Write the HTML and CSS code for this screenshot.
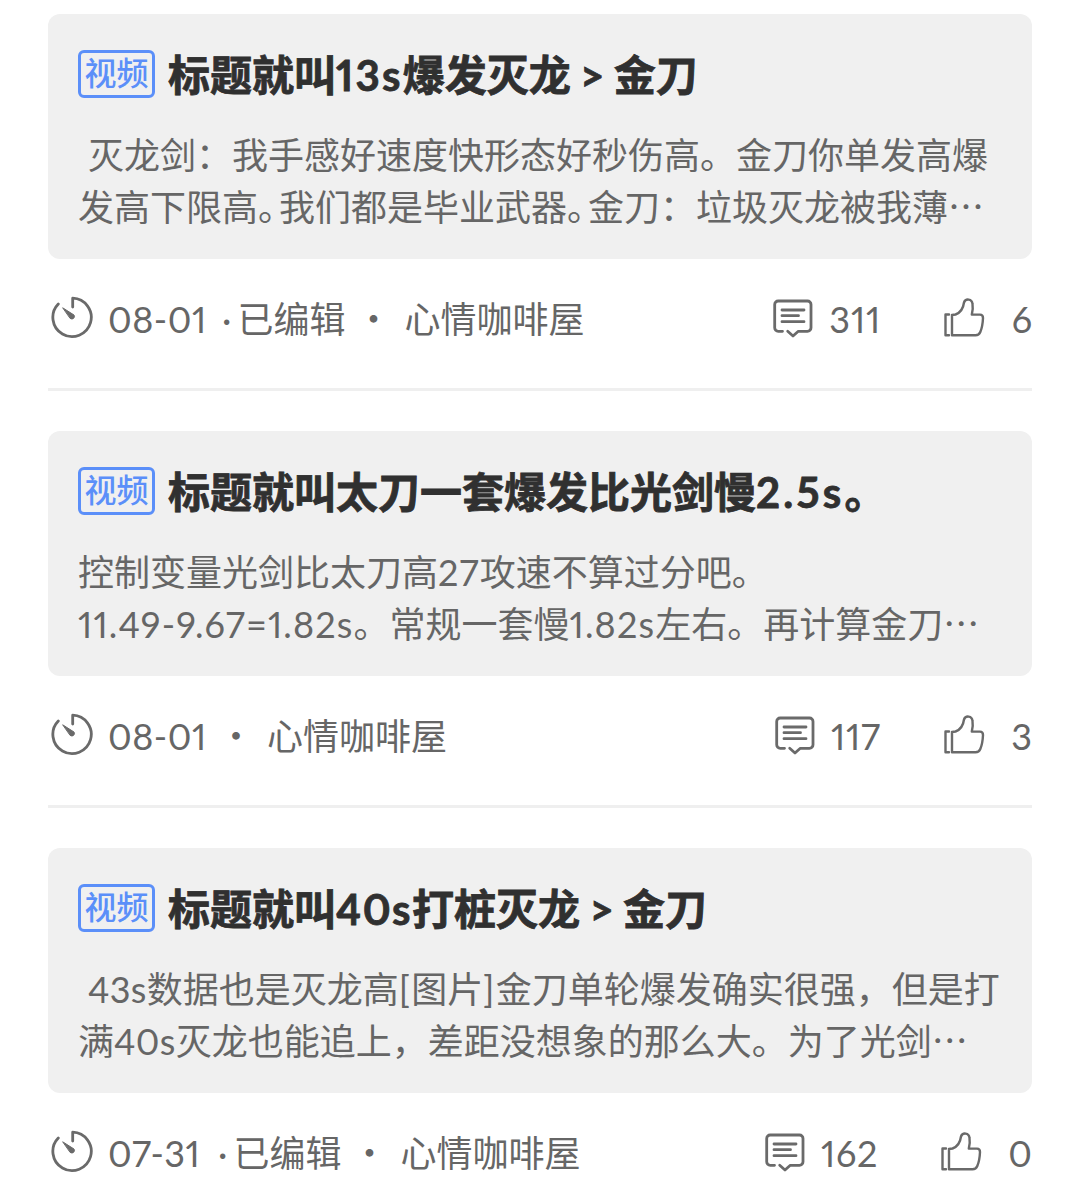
FILE: index.html
```html
<!DOCTYPE html>
<html lang="zh-CN">
<head>
<meta charset="UTF-8">
<meta name="viewport" content="width=device-width">
<title>心情咖啡屋</title>
<link rel="stylesheet" href="styles.css">
</head>
<body>

<!-- icons -->
<svg class="sprite" width="0" height="0">
	<symbol id="clock" viewBox="0 0 44 44">
		<path d="M8.300 9A19.200 19.200 0 1 0 22.700 3.200V12" />
		<path class="needle" d="M13 13l11 7a2.600 2.600 0 0 1-3.600 3.600z" />
	</symbol>
	<symbol id="comment" viewBox="0 0 44 44">
		<path d="M11.500 36.300H7.200a3.500 3.500 0 0 1-3.500-3.500V9.500A3.500 3.500 0 0 1 7.200 6H36.500A3.500 3.500 0 0 1 40 9.500V32.800a3.500 3.500 0 0 1-3.500 3.500H27.300L22 41l-5.300-4.700M11 15H33M11 20.700H27.500M11 26.700H33" />
	</symbol>
	<symbol id="like" viewBox="0 0 44 44">
		<path d="M7 19.500H3.500V40.300H7M10 20V40.300H33.500C36 40.300 37.500 39 38.300 37C40 33 40.800 28 41 23C41 20.500 40 19.600 38 19.600H29.800C30.800 15.500 31 12 30.500 9C30 3.500 23.500 3.200 22 7.500C21.300 13 19 17.500 13.500 19.500Z" />
	</symbol>
</svg>

<div class="feed">

	<!-- post -->
	<div class="post">
		<div class="card">
			<h2><span class="tag">视频</span><span class="title">标题就叫<span class="n13">13s</span>爆发灭龙<span class="gt">&gt;</span>金刀</span></h2>
			<p><span class="line lead">灭龙剑：我手感好速度快形态好秒伤高。金刀你单发高爆</span><span class="line">发高下限高<span class="stop">。</span>我们都是毕业武器<span class="stop">。</span>金刀：垃圾灭龙被我薄⋯</span></p>
		</div>
		<div class="meta">
			<svg class="icon clock"><use href="#clock" /></svg>
			<div class="info"><span class="date">08-01</span><span class="edited"><span class="mid">·</span>已编辑</span><span class="dot">・</span><span>心情咖啡屋</span></div>
			<svg class="icon"><use href="#comment" /></svg>
			<span class="num">311</span>
			<svg class="icon like"><use href="#like" /></svg>
			<span class="count">6</span>
		</div>
	</div>

	<!-- post -->
	<div class="post">
		<div class="card">
			<h2><span class="tag">视频</span><span class="title">标题就叫太刀一套爆发比光剑慢<span class="n25">2.5s</span>。</span></h2>
			<p><span class="line">控制变量光剑比太刀高<span class="calc">27</span>攻速不算过分吧。</span><span class="line"><span class="calc">11.49-9.67=1.82s</span>。常规一套慢<span class="calc">1.82s</span>左右。再计算金刀⋯</span></p>
		</div>
		<div class="meta">
			<svg class="icon clock"><use href="#clock" /></svg>
			<div class="info"><span class="date">08-01</span><span class="dot">・</span><span>心情咖啡屋</span></div>
			<svg class="icon"><use href="#comment" /></svg>
			<span class="num">117</span>
			<svg class="icon like"><use href="#like" /></svg>
			<span class="count">3</span>
		</div>
	</div>

	<!-- post -->
	<div class="post">
		<div class="card">
			<h2><span class="tag">视频</span><span class="title">标题就叫<span class="n40">40s</span>打桩灭龙<span class="gt">&gt;</span>金刀</span></h2>
			<p><span class="line lead"><span class="wide">43s</span>数据也是灭龙高<span class="bracket">[</span>图片<span class="bracket">]</span>金刀单轮爆发确实很强，但是打</span><span class="line">满<span class="wide">40s</span>灭龙也能追上，差距没想象的那么大。为了光剑⋯</span></p>
		</div>
		<div class="meta">
			<svg class="icon clock"><use href="#clock" /></svg>
			<div class="info"><span class="date short">07-31</span><span class="edited"><span class="mid">·</span>已编辑</span><span class="dot">・</span><span>心情咖啡屋</span></div>
			<svg class="icon"><use href="#comment" /></svg>
			<span class="num">162</span>
			<svg class="icon like"><use href="#like" /></svg>
			<span class="count">0</span>
		</div>
	</div>

</div>

</body>
</html>
```
FILE: styles.css
```css
* {
	margin: 0;
	padding: 0;
	box-sizing: border-box;
}

body {
	background: #fff;
	font-family: Lato, "Noto Sans CJK SC", sans-serif;
	font-feature-settings: "pnum";
	color: #666;
}

.sprite {
	display: block;
}

/* -------------------------------------
		FEED
------------------------------------- */
.feed {
	height: 1202px;
	overflow: hidden;
	padding: 14px 48px 0;
}

.post {
	height: 377px;
	margin-bottom: 40px;
	border-bottom: 3px solid #efefef;
}

.card {
	height: 245px;
	padding: 30px;
	background: #f0f0f0;
	border-radius: 12px;
}

/* -------------------------------------
		CARD TEXT
------------------------------------- */
h2 {
	display: flex;
	align-items: center;
	height: 60px;
	font-size: 42px;
	color: #303030;
	white-space: nowrap;
}

.title {
	padding-bottom: 4px;
	-webkit-text-stroke: .8px #303030;
}

.n13 {
	letter-spacing: 2.2px;
}

.n25 {
	letter-spacing: 3.2px;
}

.n40 {
	letter-spacing: 1.5px;
}

.gt {
	display: inline-block;
	width: 43px;
	text-align: center;
}

.tag {
	width: 77px;
	height: 48px;
	margin-right: 13px;
	border: 3px solid #5b8ff9;
	border-radius: 6px;
	font-size: 32px;
	line-height: 40px;
	font-weight: 500;
	text-align: center;
	color: #5b8ff9;
}

.card p {
	margin-top: 24.5px;
	font-size: 36px;
	line-height: 52px;
}

.line {
	display: block;
	white-space: nowrap;
}

.lead {
	padding-left: 10px;
}

.stop {
	letter-spacing: -15px;
}

.wide {
	letter-spacing: .3px;
}

.calc {
	letter-spacing: 1.15px;
}

.bracket {
	letter-spacing: 1.5px;
}

/* -------------------------------------
		META ROW
------------------------------------- */
.meta {
	display: flex;
	align-items: center;
	height: 120px;
	font-size: 36px;
	white-space: nowrap;
}

.icon {
	width: 44px;
	height: 44px;
	margin-top: -4px;
	fill: none;
	stroke: #6a6a6a;
	stroke-width: 2.8;
	stroke-linecap: round;
	stroke-linejoin: round;
}

.clock {
	margin-left: 2px;
}

.needle {
	fill: #6a6a6a;
	stroke-width: 1;
}

.info {
	display: flex;
	align-items: baseline;
	flex: 1;
	margin-left: 14px;
	padding-bottom: 4px;
}

.date {
	width: 114px;
	letter-spacing: .5px;
}

.short {
	width: 110px;
}

.mid {
	letter-spacing: 6px;
}

.edited {
	margin-right: 10px;
}

.dot {
	margin: 0 13px 0 -4px;
}

.edited + .dot {
	margin: 0 13px 0 0;
}

.num {
	margin-left: 14px;
	letter-spacing: .8px;
}

.like {
	margin-left: 61px;
	stroke-width: 2.4;
}

.count {
	min-width: 21px;
	margin-left: 25px;
	text-align: right;
}
```
